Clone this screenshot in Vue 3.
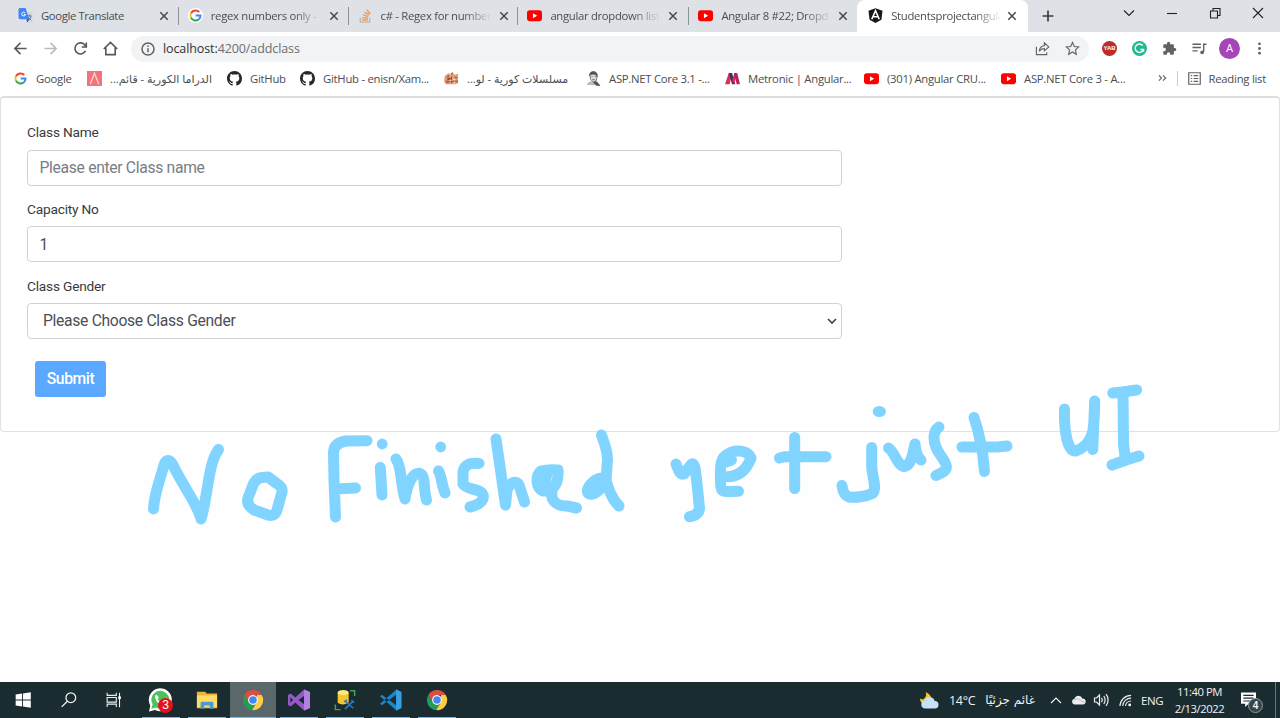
<script setup>
import { ref } from 'vue'

const tabs = [
  { icon: 'translate', title: 'Google Translate' },
  { icon: 'google', title: 'regex numbers only -' },
  { icon: 'stack', title: 'c# - Regex for number' },
  { icon: 'youtube', title: 'angular dropdown list' },
  { icon: 'youtube', title: 'Angular 8 #22; Dropd' },
  { icon: 'angular', title: 'Studentsprojectangula', active: true }
]

const bookmarks = [
  { icon: 'google', title: 'Google', w: 74 },
  { icon: 'drama', title: 'الدراما الكورية - قائم...', rtl: true, w: 140 },
  { icon: 'github', title: 'GitHub', w: 73 },
  { icon: 'github', title: 'GitHub - enisn/Xam...', w: 144 },
  { icon: 'mosaic', title: 'مسلسلات كورية - لو...', rtl: true, w: 142 },
  { icon: 'portrait', title: 'ASP.NET Core 3.1 -...', w: 139 },
  { icon: 'metronic', title: 'Metronic | Angular...', w: 139 },
  { icon: 'youtube', title: '(301) Angular CRU...', w: 137 },
  { icon: 'youtube', title: 'ASP.NET Core 3 - A...', w: 140 }
]

const apps = [
  { icon: 'windows' },
  { icon: 'search' },
  { icon: 'taskview' },
  { icon: 'whatsapp', open: true },
  { icon: 'folder', open: true },
  { icon: 'chrome', open: true, active: true },
  { icon: 'vs', open: true },
  { icon: 'sql', open: true },
  { icon: 'vscode', open: true },
  { icon: 'chrome', open: true }
]

const strokes = [
  'M153.5 509 C154 494 161 477 164 465 C166 459 170 459 173 465 C181 483 198 505 201 519 C205 507 208 480 211 468 C213 459 216 453 218.5 449.5',
  'M268 477 L262 477.5 Q256 478 253 485 L248 498 Q246 505 254 510 L268 515 Q275 517 277 510 L282 492 Q283 487 276 483 Z',
  'M367 440.7 L346 441 Q333.5 443 333.5 453 L334 480 L335.5 517 M335 489 L355.5 488',
  'M380.3 467.5 L382 495',
  'M396 459 C402 467 400 482 405 499 C407 486 412 472 420 473.5 C426 476 423 488 426.5 500',
  'M438.5 471 C441 474 442 486 445 493',
  'M479 463.5 C467 462 463 467 463 474 L463 484 C467 490 477 488 482 493 C486 499 480 505 470 507',
  'M496 439 L505.5 505 L507 490 C511 480 519 480 520 488 L524.5 502',
  'M547 474 L543 491 C536 488 535 476 541 471 Q548 469 558 470 C559 484 553 492 543 491 M552 491 C550 502 558 506 567 506 L576.5 508',
  'M601.5 435 C604 442 607.5 451 607.5 459 L606 481 C601 491 591 497 588 493 C585 489 593 479 602 478 M605 476 C608 488 611 498 619 506',
  'M676 464 C679 471 680 475 684 474 C688 471 692 457 695 468 C697 480 698 495 699.5 508 Q699 515 689.5 516.7',
  'M731.5 460 L723 463 M722 476.5 C741 479 748 466 751 458 C748 450 735 449 728 454 C719 458 720.5 469 720.5 480 C720.5 490 721 492 729 491.5 L738.5 491.3',
  'M779.5 458 L785 456.7 L826 456.7 M794.7 437.5 L794.7 488.5',
  'M871.7 447.5 L871.7 466 C872 476 877 487 873 493 C868 496 856 498 849 497 Q843 495 842 485.5',
  'M888.5 448 C894 451 897 465 904 466.5 C913 465 913 450 915 444 Q916 456 921 460',
  'M939 427 Q934 430 934 438 C934 451 944 457 946 465 C948 470 942 473 936 475.5',
  'M974 417.5 C979 432 983 452 984.5 471.5 M962 447 L997 447 L1007 446',
  'M1064.5 409 C1064 430 1067 452 1076 451 C1096 443 1094 425 1094.7 401 L1092.7 449.5',
  'M1112.7 393 L1122 392 L1136.7 390 M1123 393 L1123.5 444 L1125 456.5 M1112 465 L1126 460 L1139 456'
]

const className = ref('')
const capacity = ref('1')
const gender = ref('')
</script>

<template>
  <svg class="defs" width="0" height="0" aria-hidden="true">
    <symbol id="i-translate" viewBox="0 0 16 16">
      <path d="M6 4h8.500q1 0 1 1v9.500q0 1-1 1H9z" fill="#d4d8df" />
      <path d="M9.500 8.500h5M12 7v1.500M14 9q-1 3-3.500 4M10.500 9.500l3.500 3.500" stroke="#5e6f85" stroke-width="1" fill="none" />
      <path d="M1.500 0H8l4 12H2.500q-2 0-2-1.500v-9z" fill="#4285f4" />
      <path d="M9 12h3.200L9.800 15.500z" fill="#2550b3" />
      <path d="M7.500 5.200A2 2 0 1 0 8 6.800H6.200" stroke="#fff" stroke-width="1" fill="none" />
    </symbol>
    <symbol id="i-google" viewBox="0 0 16 16">
      <circle cx="8" cy="8" r="8" fill="#fff" />
      <g fill="none" stroke-width="2.100">
        <path d="M12 4.300A5.400 5.400 0 0 0 3.200 5.600" stroke="#ea4335" />
        <path d="M3.200 5.600a5.400 5.400 0 0 0 0 4.900" stroke="#fbbc05" />
        <path d="M3.200 10.400a5.400 5.400 0 0 0 8.400 1.600" stroke="#34a853" />
        <path d="M11.600 12A5.200 5.200 0 0 0 13.300 8H8.200" stroke="#4285f4" />
      </g>
    </symbol>
    <symbol id="i-stack" viewBox="0 0 16 16">
      <path d="M2.500 10v5h10v-5" fill="none" stroke="#bcbbbb" stroke-width="1.400" />
      <path d="M4.500 12.800h6M4.600 10.300l6 .7M5.300 7.400l5.700 1.700M6.900 4.400l5 3M9.400 1.700l3.600 4.700" fill="none" stroke="#f09a5c" stroke-width="1.500" />
    </symbol>
    <symbol id="i-youtube" viewBox="0 0 16 16">
      <rect x="0" y="2.500" width="16" height="11.500" rx="3" fill="#f00" />
      <path d="M6.300 5.600v5.200l4.500-2.600z" fill="#fff" />
    </symbol>
    <symbol id="i-angular" viewBox="0 0 16 16">
      <path d="M8 .3l7.500 2.600-1.200 9.600L8 15.900l-6.300-3.400L.5 2.900z" fill="#15191c" />
      <path d="M4 12L8 2.800 12 12M5.500 9.300h5" fill="none" stroke="#fff" stroke-width="1.700" />
    </symbol>
    <symbol id="i-drama" viewBox="0 0 16 16">
      <path d="M0 0h16v16H0z" fill="#f27478" />
      <path d="M3.500 14L8 2.500 12.500 14" stroke="#fbd8d8" fill="none" stroke-width="1.400" />
    </symbol>
    <symbol id="i-github" viewBox="0 0 16 16">
      <path fill="#24292f" d="M8 0C3.580 0 0 3.580 0 8c0 3.540 2.290 6.530 5.470 7.590.4.070.55-.17.55-.38 0-.19-.01-.82-.01-1.490-2.010.37-2.530-.49-2.690-.94-.09-.23-.48-.94-.82-1.130-.28-.15-.68-.52-.01-.53.63-.01 1.080.58 1.230.82.72 1.210 1.870.87 2.330.66.07-.52.28-.87.51-1.070-1.780-.2-3.640-.89-3.640-3.950 0-.87.31-1.590.82-2.150-.08-.2-.36-1.020.08-2.120 0 0 .67-.21 2.200.82.64-.18 1.320-.27 2-.27s1.360.09 2 .27c1.530-1.040 2.200-.82 2.200-.82.44 1.100.16 1.920.08 2.120.51.56.82 1.270.82 2.150 0 3.070-1.870 3.750-3.650 3.950.29.25.54.73.54 1.480 0 1.070-.01 1.930-.01 2.200 0 .21.15.46.55.38A8.010 8.010 0 0 0 16 8c0-4.420-3.580-8-8-8z" />
    </symbol>
    <symbol id="i-mosaic" viewBox="0 0 16 16">
      <path d="M1 5l4-3 2 2 2-3 2 3 4-1v10l-3 1H2L0 11z" fill="#dda17b" />
      <path d="M2 7l3-3 1 3zM7 3l2-2v4zM11 6h3v2h-3zM2 10h3v3H2zM12 10h3v2h-3z" fill="#d4583e" />
      <path d="M4 8h4v1H4zM8 6v7M5 11h6" stroke="#8a4f3b" stroke-width="1" />
      <path d="M6 9h2v2H6zM10 8h2v1.500h-2zM10 12h2v1h-2z" fill="#f4e0ce" />
    </symbol>
    <symbol id="i-portrait" viewBox="0 0 16 16">
      <path d="M1 15q1-4 5-4l4-1 5 5z" fill="#bbb" />
      <path d="M4 4.500Q4.500 1 8 1t4 4l-1 5-3 2-3-3z" fill="#e1e1e1" stroke="#555" stroke-width=".8" />
      <path d="M3.500 5Q4 .5 8 .5 12.500 1 12 6 10 3 7 3.500T3.500 5M5.500 6h2M9 6h2M6.500 9q2 1 3 0M8 12l3 3.500 4 .5-3-4-2-1" fill="#555" stroke="#555" stroke-width=".6" />
    </symbol>
    <symbol id="i-metronic" viewBox="0 0 16 16">
      <path d="M0 14L4 2h3.500L5 14z" fill="#e12c54" />
      <path d="M4 2h3.500L11 14H7.500z" fill="#31356e" />
      <path d="M7.500 10L10 2h2.500L10 14z" fill="#e12c54" />
      <path d="M9.500 2H13l3 12h-3.500z" fill="#b92257" />
    </symbol>
    <symbol id="i-windows" viewBox="0 0 24 24">
      <path d="M4 6l7-1v6.500H4zM12 4.800L20.500 3.500v8H12zM4 12.500h7V19l-7-1zM12 12.500h8.500v8L12 19.200z" fill="#fff" />
    </symbol>
    <symbol id="i-search" viewBox="0 0 24 24">
      <circle cx="14" cy="9.500" r="5.300" fill="none" stroke="#eee" stroke-width="1.400" />
      <path d="M10.200 13.300L4 19.500" stroke="#eee" stroke-width="1.500" />
    </symbol>
    <symbol id="i-taskview" viewBox="0 0 24 24">
      <path d="M4.500 4v3h10V4M4.500 19.500v-3h10v3M4.500 9.300h10v5h-10zM18 4v16" fill="none" stroke="#eee" stroke-width="1.200" />
      <path d="M16.700 8h2.800v3h-2.800z" fill="#fff" />
    </symbol>
    <symbol id="i-whatsapp" viewBox="0 0 24 24">
      <path d="M1 23.500l1.300-6A11.500 11.500 0 1 1 7 22z" fill="#fff" />
      <path d="M3.300 20.800l1.300-4.600a8.900 8.900 0 1 1 3.200 3.200z" fill="#4bc35b" />
      <path d="M8.500 6.500L7 8c0 5 4 9 8.500 9l1.500-2-2.500-1.700-1.300 1.200q-2.500-1-3.500-3.600l1.200-1.300z" fill="#fff" />
    </symbol>
    <symbol id="i-folder" viewBox="0 0 24 24">
      <path d="M1 3h9l1.500 2H23v16H1z" fill="#eab637" />
      <path d="M1 7h22v13H1z" fill="#ffdc68" />
      <path d="M5 21.500V15q0-1 1-1h12q1 0 1 1v6.500h-4V18H9v3.500z" fill="#4a9bd4" />
    </symbol>
    <symbol id="i-chrome" viewBox="0 0 24 24">
      <path d="M2.500 6.500A11 11 0 0 1 21.500 6.500H12L7.300 14.800z" fill="#db4f43" />
      <path d="M2.500 6.500a11 11 0 0 0 8.600 16.500l5-8.400H7.300z" fill="#259b55" />
      <path d="M21.500 6.500A11 11 0 0 1 11.100 23l5.200-8.500V6.500z" fill="#ffcd41" />
      <circle cx="12" cy="12" r="5.400" fill="#f5f5f5" />
      <circle cx="12" cy="12" r="4.100" fill="#4688f1" />
    </symbol>
    <symbol id="i-vs" viewBox="0 0 24 24">
      <path fill-rule="evenodd" d="M0 6.500L3 5l5 4.200L17.500.5 24 3.200v17.600l-6.500 2.700L8 14.800 3 19l-3-1.500zM2.500 9v6l3-3zM17.500 7.500L11.500 12l6 4.500z" fill="#9559c7" />
      <path d="M17.500.5L24 3.200v17.600l-6.500 2.700z" fill="#b380e3" />
    </symbol>
    <symbol id="i-sql" viewBox="0 0 24 24">
      <path d="M4 4v11q5 4 12 0V4z" fill="#f4c52c" />
      <ellipse cx="10" cy="4" rx="6" ry="2.800" fill="#ffe878" />
      <path d="M17.500 2h5v5.500M1.500 17v5.500h5.500" fill="none" stroke="#45a250" stroke-width="1.600" />
      <path d="M12 13l9 8M21 13l-9 9M11 14l3-2M19 12l3 3" stroke="#287ab8" stroke-width="1.800" />
    </symbol>
    <symbol id="i-vscode" viewBox="0 0 24 24">
      <path d="M0 8l2-1.600L18 18v5.500zM0 16l2 1.600L18 6V.5z" fill="#1689ce" />
      <path d="M17.500.3l6 3v17.400l-6 3z" fill="#37a0e3" />
    </symbol>
  </svg>

  <div class="screen">
    <header class="tabstrip">
      <div v-for="(t, i) in tabs" :key="i" class="tab" :class="{ active: t.active }">
        <svg class="fav"><use :href="'#i-' + t.icon" /></svg>
        <span class="tab-title" :class="{ whole: i === 0 }">{{ t.title }}</span>
        <svg class="x" viewBox="0 0 10 10"><path d="M1.300 1.300l7.400 7.400M8.700 1.300L1.300 8.700" /></svg>
      </div>
      <svg class="plus" viewBox="0 0 12 12"><path d="M6 .5v11M.5 6h11" /></svg>
      <div class="controls">
        <svg viewBox="0 0 12 12"><path d="M1 3.500l5 5 5-5" /></svg>
        <svg viewBox="0 0 12 12"><path d="M1 6.500h10" /></svg>
        <svg viewBox="0 0 12 12"><path d="M1.500 4h7v7h-7zM4 4V1.500h7v7H8.500" /></svg>
        <svg viewBox="0 0 12 12"><path d="M1 1l10 10M11 1L1 11" /></svg>
      </div>
    </header>

    <div class="toolbar">
      <svg class="nav" viewBox="0 0 16 16"><path d="M14.500 8H2M8 2L2 8l6 6" /></svg>
      <svg class="nav dim" viewBox="0 0 16 16"><path d="M1.500 8H14M8 2l6 6-6 6" /></svg>
      <svg class="nav" viewBox="0 0 16 16"><path d="M13.300 10.500A5.900 5.900 0 1 1 12.800 4.500L14 6M14.200 1.500v4.900H9.300" /></svg>
      <svg class="nav" viewBox="0 0 16 16"><path d="M.8 8.500L8 1.500l7.200 7M3 7v7.500h10V7" /></svg>
      <div class="omnibox">
        <svg class="info" viewBox="0 0 14 14"><circle cx="7" cy="7" r="6" /><path d="M7 6.200v4M7 3.600v1.400" /></svg>
        <span class="url"><b>localhost:</b>4200/addclass</span>
        <svg class="obi" viewBox="0 0 16 16"><path d="M1.500 6v8.500h11V12M4.500 11q.5-5.500 5.500-6V2l4.700 4.300L10 10.500V8Q6.500 8 4.500 11z" /></svg>
        <svg class="obi star" viewBox="0 0 16 16"><path d="M8 1.500l1.900 4.400 4.800.4-3.600 3.200 1 4.700L8 11.700l-4.100 2.500 1-4.700L1.300 6.300l4.800-.4z" /></svg>
      </div>
      <div class="ext">
        <span class="yab">YAB</span>
        <svg class="e15" viewBox="0 0 16 16"><circle cx="8" cy="8" r="8" fill="#22b893" /><path d="M11.500 5A4.500 4.500 0 1 0 12.200 9H9M12.300 8.500v3" fill="none" stroke="#fff" stroke-width="1.500" /></svg>
        <svg class="e15" viewBox="0 0 24 24"><path fill="#5f6368" d="M20.500 11H19V7c0-1.100-.9-2-2-2h-4V3.500a2.500 2.500 0 0 0-5 0V5H4c-1.100 0-2 .9-2 2v3.800h1.500a2.700 2.700 0 0 1 0 5.400H2V20c0 1.100.9 2 2 2h3.800v-1.500a2.700 2.700 0 0 1 5.400 0V22H17c1.100 0 2-.9 2-2v-4h1.500a2.500 2.500 0 0 0 0-5z" /></svg>
        <svg class="e15" viewBox="0 0 16 16"><path d="M.5 3.500h9M.5 7h9M.5 10.500h5.500M12.500 11.500V3.500h3" fill="none" stroke="#5f6368" stroke-width="1.500" /><circle cx="10.800" cy="12" r="2" fill="#5f6368" /></svg>
        <span class="avatar">A</span>
        <svg class="e15" viewBox="0 0 16 16"><g fill="#5f6368"><circle cx="8" cy="3" r="1.500" /><circle cx="8" cy="8" r="1.500" /><circle cx="8" cy="13" r="1.500" /></g></svg>
      </div>
    </div>

    <nav class="bookmarks">
      <div v-for="(b, i) in bookmarks" :key="i" class="bm" :style="{ width: b.w + 'px' }">
        <svg class="fav"><use :href="'#i-' + b.icon" /></svg>
        <span :dir="b.rtl ? 'rtl' : 'ltr'" :class="{ ar: b.rtl }">{{ b.title }}</span>
      </div>
      <div class="reading">
        <svg class="more" viewBox="0 0 10 10"><path d="M1 2l3 3-3 3M5.500 2l3 3-3 3" /></svg>
        <i></i>
        <svg class="list" viewBox="0 0 14 14"><path d="M.8.8h12.400v12.400H.8zM3 4h1.500M6 4h5M3 7h1.500M6 7h5M3 10h1.500M6 10h5" /></svg>
        <span>Reading list</span>
      </div>
    </nav>

    <main class="page">
      <form class="card" @submit.prevent>
        <label for="name">Class Name</label>
        <input id="name" v-model="className" placeholder="Please enter Class name" />
        <label for="cap">Capacity No</label>
        <input id="cap" v-model="capacity" />
        <label for="gender">Class Gender</label>
        <div class="select">
          <select id="gender" v-model="gender"><option value="">Please Choose Class Gender</option></select>
          <svg viewBox="0 0 10 8"><path d="M1 2l4 4 4-4" /></svg>
        </div>
        <button>Submit</button>
      </form>
    </main>

    <footer class="taskbar">
      <div v-for="(a, i) in apps" :key="i" class="app" :class="{ open: a.open, active: a.active }">
        <svg :class="a.icon"><use :href="'#i-' + a.icon" /></svg>
        <span v-if="a.icon === 'whatsapp'" class="badge">3</span>
      </div>
      <div class="tray">
        <svg class="weather" viewBox="0 0 22 20"><path d="M7 1q2 5-3 8L1 8q0 5 5 6l7-3q1-7-6-10z" fill="#f5c331" /><path d="M6 18.500a4.300 4.300 0 0 1 0-8.500q1.500-4 5.500-3.500 4 .3 5 4a4 4 0 0 1 0 8z" fill="#c6e0f7" /></svg>
        <span class="temp">14°C</span>
        <span class="cond" dir="rtl">غائم جزئيًا</span>
        <svg class="up" viewBox="0 0 12 8"><path d="M1 7l5-5 5 5" /></svg>
        <svg class="cloud" viewBox="0 0 16 10"><path d="M3.500 9.800a3.200 3.200 0 0 1 0-6.200Q5 .3 8 .5q3.200.2 4 3 3.500 0 3.700 3.200-.2 3-3 3.100z" fill="#ececec" /><path d="M3 5l4-1.500L14.500 8" stroke="#bbb" fill="none" /></svg>
        <svg class="sound" viewBox="0 0 16 14"><path d="M1 5h2l3-3v10L3 9H1zM8 4.800q1.500 2.200 0 4.400M10.300 3q2.700 4 0 8M12.600 1.200q4 5.800 0 11.600" /></svg>
        <svg class="wifi" viewBox="0 0 14 14"><path d="M1 13A12 12 0 0 1 13 1.500M4 13a9 9 0 0 1 9-8.500M7 13a6 6 0 0 1 6-5.500" /><circle cx="11.500" cy="11.800" r="1.500" /></svg>
        <span class="lang">ENG</span>
        <div class="clock"><span>11:40 PM</span><span>2/13/2022</span></div>
        <div class="notify">
          <svg viewBox="0 0 16 16"><path d="M0 0h16v12H8l-3.500 3.500V12H0z" fill="#fff" /><path d="M2.500 3h11M2.500 6h11M2.500 9h7" stroke="#1b2c31" stroke-width="1.200" /></svg>
          <b>4</b>
        </div>
        <i class="peek"></i>
      </div>
    </footer>

    <svg class="ink" viewBox="0 0 1280 718">
      <path v-for="(s, i) in strokes" :key="i" :d="s" />
      <g>
        <circle cx="382.200" cy="444" r="5.400" />
        <circle cx="440.700" cy="447" r="5.400" />
        <ellipse cx="879.300" cy="411.500" rx="6.600" ry="5.500" />
      </g>
    </svg>
  </div>
</template>

<style>
html, body { background: #fefefe; overflow: hidden; }
</style>

<style scoped>
* { box-sizing: border-box; }
.defs { position: absolute; }
.screen { position: relative; width: 1280px; height: 718px; display: flex; flex-direction: column; background: #fefefe; font-family: "Open Sans", "Noto Sans", "DejaVu Sans", sans-serif; font-size: 11.300px; color: #4a4d51; overflow: hidden; }
svg { flex: none; display: block; }
.tabstrip { height: 32px; display: flex; align-items: center; padding-left: 9px; background: #dee1e6; }
.tab { position: relative; width: 169.800px; height: 32px; display: flex; align-items: center; padding: 0 0 1px 9px; }
.tab:not(.active):not(:nth-child(5))::after { content: ""; position: absolute; right: 0; top: 7px; width: 1px; height: 18px; background: #8c8f94; }
.tab:nth-child(4) { width: 171px; }
.tab:nth-child(5) { width: 167.800px; }
.tab.active { width: 171px; background: #fff; border-radius: 8px 8px 0 0; padding-left: 11px; }
.fav { width: 15px; height: 15px; }
.tab-title { width: 112px; margin-left: 8px; white-space: nowrap; letter-spacing: -.3px; mask-image: linear-gradient(90deg, #000 74%, transparent 99%); }
.tab-title.whole { mask-image: none; letter-spacing: -.38px; }
.x { width: 10px; height: 10px; margin-left: 6px; }
.tab:nth-child(5) .x { margin-left: 5px; }
.tab.active .x { margin-left: 4px; }
.x path { stroke: #45484c; stroke-width: 1.500; }
.plus { width: 12px; height: 12px; margin-left: 14px; }
.plus path { stroke: #3c4043; stroke-width: 1.700; }
.controls { margin-left: auto; display: flex; gap: 31px; padding: 0 16px 6px 0; }
.controls svg { width: 12px; height: 12px; }
.controls path { fill: none; stroke: #222; stroke-width: 1.100; }
.toolbar { height: 34px; display: flex; align-items: center; background: #fff; padding: 0 0 1px 13px; }
.nav { width: 15px; height: 15px; margin-right: 15px; }
.nav path { fill: none; stroke: #55585c; stroke-width: 1.700; }
.nav.dim path { stroke: #b9bbbd; }
.omnibox { width: 958px; height: 26px; margin-left: -2px; border-radius: 13px; background: #f1f3f4; display: flex; align-items: center; padding: 0 9px 0 10px; }
.info { width: 14px; height: 14px; }
.info circle, .info path { fill: none; stroke: #5f6368; stroke-width: 1.500; }
.url { margin: 0 auto 0 8px; font-size: 12.500px; letter-spacing: -.1px; color: #6b6e72; }
.url b { font-weight: 400; color: #303236; }
.obi { width: 15px; height: 15px; margin-left: 15px; }
.obi path { fill: none; stroke: #5f6368; stroke-width: 1.200; }
.ext { display: flex; align-items: center; flex: 1; padding-left: 13px; gap: 15px; }
.e15 { width: 15px; height: 15px; }
.yab { width: 15px; height: 15px; border-radius: 50%; background: #bd2c28; color: #fff; font: bold 6px/15px "Liberation Sans", sans-serif; text-align: center; }
.avatar { width: 21px; height: 21px; margin: 0 -3px 0 -3px; border-radius: 50%; background: #a545b8; color: #fff; font: 11px/21px Roboto, sans-serif; text-align: center; }
.bookmarks { height: 30px; display: flex; align-items: center; background: #fff; padding: 0 14px 6px 13px; }
.bm { display: flex; align-items: center; flex: none; white-space: nowrap; }
.bm span { margin-left: 8px; letter-spacing: -.26px; }
.bm .ar { letter-spacing: 0; font-family: "Open Sans", "DejaVu Sans", sans-serif; font-size: 11px; }
.reading { margin-left: auto; display: flex; align-items: center; white-space: nowrap; letter-spacing: -.25px; }
.more { width: 9px; height: 10px; }
.more path, .list path { fill: none; stroke: #5f6368; stroke-width: 1.300; }
.reading i { width: 1px; height: 15px; background: #c9cccf; margin: 0 10px; }
.list { width: 13px; height: 13px; margin-right: 8px; }
.page { flex: 1; font-family: Roboto, sans-serif; }
.card { height: 336px; border: 1px solid #e1e1e1; border-top: 2px solid #dedede; border-radius: 4px; padding: 25px 26px; background: #fff; }
label { display: block; height: 16px; font-size: 13.700px; line-height: 18px; letter-spacing: -.2px; color: #373b40; }
input, select { display: block; width: 815px; height: 36px; border: 1px solid #d0d3d6; border-radius: 4px; font: 15.700px Roboto, sans-serif; letter-spacing: -.32px; padding: 0 12px; color: #495057; background: #fff; outline: none; margin: 10.600px 0 14.200px; appearance: none; }
input { padding-left: 11.500px; }
input::placeholder { color: #777e85; opacity: 1; }
.select { position: relative; width: 815px; height: 36px; margin-top: 10px; }
.select select { padding-left: 15px; margin: 0; }
.select svg { position: absolute; right: 5px; top: 14px; width: 10px; height: 8px; }
.select path { fill: none; stroke: #444; stroke-width: 1.700; }
button { display: block; width: 71px; height: 36px; margin: 22px 0 0 8px; padding: 0 0 1px; border: 0; border-radius: 3px; background: #5aa8ff; color: #fff; font: 500 15.700px Roboto, sans-serif; letter-spacing: -.4px; }
.taskbar { height: 36px; display: flex; background: #1b2c31; color: #f1f1f1; }
.app { position: relative; width: 46px; height: 36px; display: flex; align-items: center; justify-content: center; }
.app svg { width: 22px; height: 22px; margin-right: 1px; }
.app .taskview { margin-right: 3px; }
.app .whatsapp { width: 24px; height: 24px; margin-right: 2px; }
.app.active { background: #5a686b; }
.app.open::after { content: ""; position: absolute; bottom: 0; left: 4px; right: 4px; height: 1px; background: #76b9ed; }
.app.active::after { left: 0; right: 0; }
.badge { position: absolute; left: 20px; top: 16px; width: 15px; height: 15px; border-radius: 50%; background: #e3131b; color: #fff; font: 12px/15px "Liberation Sans", sans-serif; text-align: center; }
.tray { margin-left: auto; display: flex; align-items: center; white-space: nowrap; }
.weather { width: 21px; height: 19px; margin-right: 9px; }
.temp { width: 35px; font-size: 12.500px; letter-spacing: -.3px; }
.cond { width: 51px; font: 12px "DejaVu Sans", sans-serif; }
.up { width: 12px; height: 8px; margin-left: 15px; }
.up path, .sound path, .wifi path { fill: none; stroke: #eee; stroke-width: 1.200; }
.cloud { width: 15px; height: 10px; margin-left: 9px; }
.sound { width: 17px; height: 14px; margin-left: 7px; }
.wifi { width: 13px; height: 13px; margin-left: 9px; }
.wifi circle { fill: #fff; }
.lang { width: 22px; margin-left: 9px; font-size: 11.500px; letter-spacing: -.4px; }
.clock { width: 49px; margin-left: 12px; display: flex; flex-direction: column; align-items: center; font-size: 11.300px; line-height: 17px; letter-spacing: -.45px; }
.notify { position: relative; margin: 0 19px 0 17px; }
.notify svg { width: 15px; height: 16px; }
.notify b { position: absolute; left: 7px; top: 6px; width: 15px; height: 15px; border: 1px solid #939b9e; border-radius: 50%; background: #35454a; font: bold 10px/13px "Liberation Sans", sans-serif; text-align: center; }
.peek { width: 1px; height: 36px; margin-right: 4px; background: #6c7679; }
.ink { position: absolute; inset: 0; width: 1280px; height: 718px; pointer-events: none; }
.ink path { fill: none; stroke: #80d4ff; stroke-width: 11; stroke-linecap: round; stroke-linejoin: round; }
.ink g { fill: #80d4ff; }
</style>
